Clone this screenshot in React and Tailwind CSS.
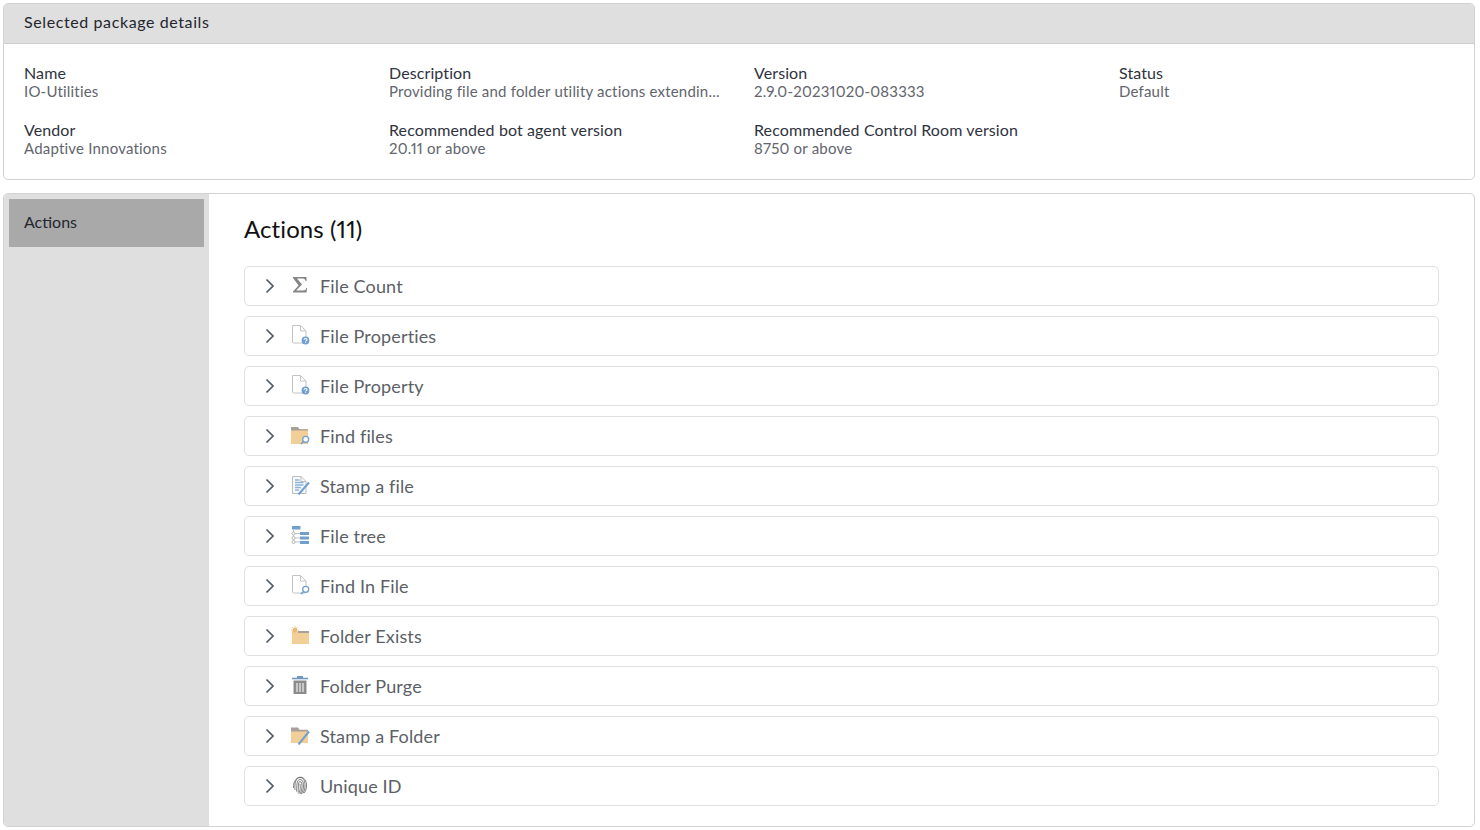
import React from "react";

const font = "font-['Lato','Noto_Sans',sans-serif]";

function Chevron() {
  return (
    <svg width="10" height="16" viewBox="0 0 10 16" fill="none">
      <path d="M1.5 1.5L8 8L1.5 14.5" stroke="#4f5b6b" strokeWidth="1.7" />
    </svg>
  );
}

function Sigma() {
  return (
    <svg width="20" height="20" viewBox="0 0 20 20" fill="none">
      <path d="M3 2H16.5V6H15.5C15.3 4.5 14.5 3.6 12.5 3.6H7L12 9.5L6.2 15.5H13C15 15.5 15.8 14.8 16.2 13H17L16.5 17.5H3V16.6L8.6 10.6L3 3Z" fill="#858585" />
    </svg>
  );
}

function FilePage() {
  return (
    <path d="M2.5 .5H10.5L16 6V17A1 1 0 0 1 15 18H3.5A1 1 0 0 1 2.5 17ZM10.5 .5V6H16" fill="#fff" stroke="#c4c4c4" />
  );
}

function FileQuestion() {
  return (
    <svg width="20" height="20" viewBox="0 0 20 20" fill="none">
      <FilePage />
      <circle cx="15.5" cy="15.5" r="3.9" fill="#6f9fcf" />
      <path d="M14 14.6C14.1 13.1 17 13.1 17 14.7C17 15.7 15.6 15.6 15.6 16.6M15.6 17.2V18" stroke="#fff" strokeWidth="1.1" />
    </svg>
  );
}

function Lens() {
  return (
    <g>
      <circle cx="15.7" cy="14.3" r="3" fill="#fff" stroke="#6f9fcf" strokeWidth="1.3" />
      <path d="M13.6 16.5L11 19" stroke="#6f9fcf" strokeWidth="1.6" />
    </g>
  );
}

function FolderFind() {
  return (
    <svg width="20" height="20" viewBox="0 0 20 20" fill="none">
      <rect x="1" y="4" width="17" height="15" fill="#f3cf98" />
      <path d="M1 2H8L9.5 4.2H18V5.5H1Z" fill="#a6a29a" />
      <Lens />
    </svg>
  );
}

function StampFile() {
  return (
    <svg width="20" height="20" viewBox="0 0 20 20" fill="none">
      <path d="M2.5 1.5H11L16 6.5V18.5H2.5ZM11 1.5V6.5H16" fill="#f7f9fb" stroke="#bdbdbd" />
      <path d="M5 5H9.5M5 7.5H13.5M5 10H13.5M5 12.5H11M5 15H9" stroke="#8fb4da" strokeWidth="1.3" />
      <path d="M19 7.5L8.5 19.5" stroke="#6f9fcf" strokeWidth="2" />
    </svg>
  );
}

function FileTree() {
  return (
    <svg width="20" height="20" viewBox="0 0 20 20" fill="none">
      <rect x="2" y="1" width="8.5" height="3.5" fill="#6f9fcf" />
      <path d="M3.5 5V17M3.5 8.5H10M3.5 13H10M3.5 17H10" stroke="#c4c4c4" />
      <circle cx="3.5" cy="8.5" r="1.5" fill="#fff" stroke="#b5b5b5" />
      <circle cx="3.5" cy="13" r="1.5" fill="#fff" stroke="#b5b5b5" />
      <circle cx="3.5" cy="17" r="1.5" fill="#fff" stroke="#b5b5b5" />
      <rect x="10" y="7" width="9" height="3" fill="#6f9fcf" />
      <rect x="10" y="11.5" width="9" height="3" fill="#6f9fcf" />
      <rect x="10" y="16" width="9" height="3" fill="#6f9fcf" />
    </svg>
  );
}

function FindInFile() {
  return (
    <svg width="20" height="20" viewBox="0 0 20 20" fill="none">
      <FilePage />
      <Lens />
    </svg>
  );
}

function FolderExists() {
  return (
    <svg width="20" height="20" viewBox="0 0 20 20" fill="none">
      <rect x="2" y="6" width="17" height="13" fill="#f3cf98" />
      <rect x="8" y="6" width="11" height="2" fill="#a6a29a" />
      <circle cx="5" cy="5" r="2.2" fill="#eeba74" />
      <path d="M5 1V9M1 5H9M2.2 2.2L7.8 7.8M7.8 2.2L2.2 7.8" stroke="#eeba74" strokeWidth=".8" />
    </svg>
  );
}

function Trash() {
  return (
    <svg width="20" height="20" viewBox="0 0 20 20" fill="none">
      <path d="M2 3.5H18" stroke="#6f97bf" strokeWidth="1.6" />
      <rect x="7" y="1" width="6" height="2" fill="#6f97bf" />
      <path d="M3.5 5.5H16.5V19H3.5Z" fill="#8c8c8c" />
      <path d="M7 8V17M10 8V17M13 8V17" stroke="#e8e8e8" strokeWidth="1.3" />
    </svg>
  );
}

function FolderStamp() {
  return (
    <svg width="20" height="20" viewBox="0 0 20 20" fill="none">
      <path d="M1 5H18V18H1Z" fill="#f3cf98" />
      <path d="M1 2.5H8L9.5 4.7H18V6.5H1Z" fill="#a6a29a" />
      <path d="M19 6.5L8.5 19.5" stroke="#6f9fcf" strokeWidth="2" />
    </svg>
  );
}

function Fingerprint() {
  return (
    <svg width="20" height="20" viewBox="0 0 20 20" fill="none">
      <g stroke="#555" strokeWidth=".75">
        <path d="M3.5 13C3 -1 17 -1 16.5 11C16.4 14 15.5 16.5 14 18" />
        <path d="M5 15C4.5 9 5.5 2.5 10 2.5C14.5 2.5 15 8 15 11C15 14 14 16.5 12.8 18.5" />
        <path d="M6.5 16.5C7 12 6.3 4.5 10 4.5C13.3 4.5 13.5 9 13.5 11C13.5 13.5 12.7 16.5 11.3 19" />
        <path d="M8 17.5C8.7 14 7.8 6.5 10 6.5C12 6.5 12 10 12 11.5C12 13.5 11.3 16.5 10 19" />
        <path d="M10 9C10.5 12 10.5 15 8.8 18.5" />
      </g>
    </svg>
  );
}

const actions = [
  { name: "File Count", icon: <Sigma /> },
  { name: "File Properties", icon: <FileQuestion /> },
  { name: "File Property", icon: <FileQuestion /> },
  { name: "Find files", icon: <FolderFind /> },
  { name: "Stamp a file", icon: <StampFile /> },
  { name: "File tree", icon: <FileTree /> },
  { name: "Find In File", icon: <FindInFile /> },
  { name: "Folder Exists", icon: <FolderExists /> },
  { name: "Folder Purge", icon: <Trash /> },
  { name: "Stamp a Folder", icon: <FolderStamp /> },
  { name: "Unique ID", icon: <Fingerprint /> },
];

const details = [
  { label: "Name", value: "IO-Utilities" },
  { label: "Description", value: "Providing file and folder utility actions extendin..." },
  { label: "Version", value: "2.9.0-20231020-083333" },
  { label: "Status", value: "Default" },
  { label: "Vendor", value: "Adaptive Innovations" },
  { label: "Recommended bot agent version", value: "20.11 or above" },
  { label: "Recommended Control Room version", value: "8750 or above" },
];

function Detail({ label, value }) {
  return (
    <div className="min-w-0">
      <div className="text-[16px] leading-[18px] tracking-[0.1px] whitespace-nowrap text-[#2f3340]">{label}</div>
      <div className="text-[15px] leading-[18px] tracking-[0.2px] whitespace-nowrap text-[#62656d] [font-variant-numeric:proportional-nums]">{value}</div>
    </div>
  );
}

function ActionRow({ name, icon }) {
  return (
    <div className="flex h-10 items-center rounded-[5px] border border-[#e0e0e0] bg-white pl-5">
      <Chevron />
      <div className="-mt-[3px] ml-[15px] flex h-5 w-5 items-center justify-center">{icon}</div>
      <div className="ml-[10px] text-[18px] tracking-[0.15px] text-[#5c5f66]">{name}</div>
    </div>
  );
}

export default function App() {
  return (
    <div className={`${font} flex h-[830px] w-[1480px] flex-col gap-[13px] overflow-hidden bg-white pt-[3px] pr-[5px] pb-[3px] pl-[3px]`}>
      {/* package details */}
      <section className="h-[177px] overflow-hidden rounded-[5px] border border-[#d2d2d2]">
        <div className="flex h-10 items-center border-b border-[#cfcfcf] bg-[#dfdfdf] px-5 pb-1 text-[16px] tracking-[0.6px] text-[#23262e]">
          Selected package details
        </div>
        <div className="grid grid-cols-[365px_365px_365px_1fr] gap-y-[21px] px-5 pt-5">
          {details.map((d) => (
            <Detail key={d.label} label={d.label} value={d.value} />
          ))}
        </div>
      </section>

      {/* actions */}
      <section className="flex h-[634px] overflow-hidden rounded-[5px] border border-[#d2d2d2]">
        <aside className="w-[205px] shrink-0 bg-[#dfdfdf] p-[5px]">
          <div className="flex h-12 items-center bg-[#a9a9a9] px-[15px] pb-[2px] text-[16px] text-[#23262e]">Actions</div>
        </aside>
        <main className="flex-1 pt-[17px] pr-[35px] pl-[35px]">
          <h1 className="h-[36px] text-[24px] leading-[36px] tracking-[0.1px] text-[#111] [font-variant-numeric:proportional-nums]">Actions (11)</h1>
          <div className="mt-[19px] flex flex-col gap-[10px]">
            {actions.map((a) => (
              <ActionRow key={a.name} name={a.name} icon={a.icon} />
            ))}
          </div>
        </main>
      </section>
    </div>
  );
}
